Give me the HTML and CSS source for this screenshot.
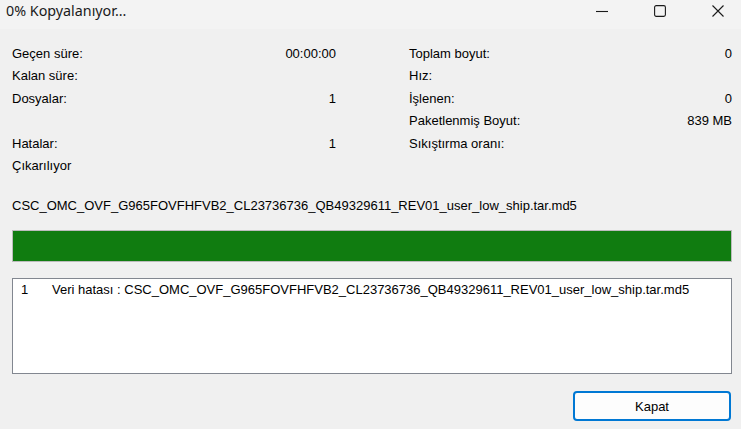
FILE: index.html
```html
<!doctype html>
<html lang="tr">
<head>
    <meta charset="UTF-8">
    <title>0% Kopyalanıyor...</title>
    <link rel="stylesheet" href="styles.css">
</head>
<body>
<div class="titlebar">
    <div class="title">0% Kopyalanıyor...</div>
    <div class="controls">
        <div class="ctl">
            <svg width="12" height="12" viewBox="0 0 12 12"><path d="M0 6.5H12" stroke="#1a1a1a" stroke-width="1.1"/></svg>
        </div>
        <div class="ctl">
            <svg width="12" height="12" viewBox="0 0 12 12"><rect x="0.6" y="0.6" width="10.8" height="10.8" rx="1.6" fill="none" stroke="#1a1a1a" stroke-width="1.1"/></svg>
        </div>
        <div class="ctl">
            <svg width="12" height="12" viewBox="0 0 12 12"><path d="M0.5 0.5L11.5 11.5M11.5 0.5L0.5 11.5" stroke="#1a1a1a" stroke-width="1.1"/></svg>
        </div>
    </div>
</div>

<div class="content">
    <div class="stats">
        <div class="col">
            <div class="row"><span>Geçen süre:</span><span>00:00:00</span></div>
            <div class="row"><span>Kalan süre:</span><span></span></div>
            <div class="row"><span>Dosyalar:</span><span>1</span></div>
            <div class="row"></div>
            <div class="row"><span>Hatalar:</span><span>1</span></div>
            <div class="row"><span>Çıkarılıyor</span><span></span></div>
        </div>
        <div class="col">
            <div class="row"><span>Toplam boyut:</span><span>0</span></div>
            <div class="row"><span>Hız:</span><span></span></div>
            <div class="row"><span>İşlenen:</span><span>0</span></div>
            <div class="row"><span>Paketlenmiş Boyut:</span><span>839 MB</span></div>
            <div class="row"><span>Sıkıştırma oranı:</span><span></span></div>
        </div>
    </div>

    <div class="filename">CSC_OMC_OVF_G965FOVFHFVB2_CL23736736_QB49329611_REV01_user_low_ship.tar.md5</div>

    <div class="progress"><div class="fill"></div></div>

    <div class="log">
        <div class="log-item"><span class="num">1</span><span>Veri hatası : CSC_OMC_OVF_G965FOVFHFVB2_CL23736736_QB49329611_REV01_user_low_ship.tar.md5</span></div>
    </div>

    <div class="footer">
        <button class="close-btn">Kapat</button>
    </div>
</div>
</body>
</html>
```

FILE: styles.css
```css
body {
    margin: 0;
    background-color: #f0f0f0;
    font-family: 'Liberation Sans', Arial, sans-serif;
    font-size: 13px;
    color: #000000;
    overflow: hidden;
}
.titlebar {
    height: 29px;
    background-color: #f3f3f3;
    display: flex;
    justify-content: space-between;
    overflow: hidden;
}
.title {
    font-family: 'Noto Sans', sans-serif;
    font-size: 14.3px;
    color: #1a1a1a;
    padding: 1px 0 0 6px;
}
.controls {
    display: flex;
    margin-right: -6px;
}
.ctl {
    width: 58px;
    display: flex;
    justify-content: center;
    padding-top: 5px;
}
.content {
    padding: 14px 9px 0 12px;
}
.stats {
    display: grid;
    grid-template-columns: 324px 323px;
    column-gap: 73px;
}
.row {
    height: 22.4px;
    line-height: 22.4px;
    display: flex;
    justify-content: space-between;
}
.filename {
    margin-top: 18px;
    line-height: 22px;
}
.progress {
    margin-top: 13px;
    height: 30px;
    border: 1px solid #bcbcbc;
    background-color: #e6e6e6;
}
.fill {
    height: 100%;
    width: 100%;
    background-color: #107c10;
}
.log {
    margin-top: 16px;
    height: 94px;
    border: 1px solid #828790;
    background-color: #ffffff;
}
.log-item {
    display: flex;
    padding: 3px 0 0 8px;
    line-height: 16px;
}
.num {
    width: 31px;
}
.footer {
    display: flex;
    justify-content: flex-end;
    margin-top: 17px;
    padding-right: 1px;
}
.close-btn {
    width: 158px;
    height: 30px;
    border: 2px solid #0078d4;
    border-radius: 4px;
    background-color: #fdfdfd;
    font-family: 'Liberation Sans', Arial, sans-serif;
    font-size: 13px;
    color: #000000;
}
```
